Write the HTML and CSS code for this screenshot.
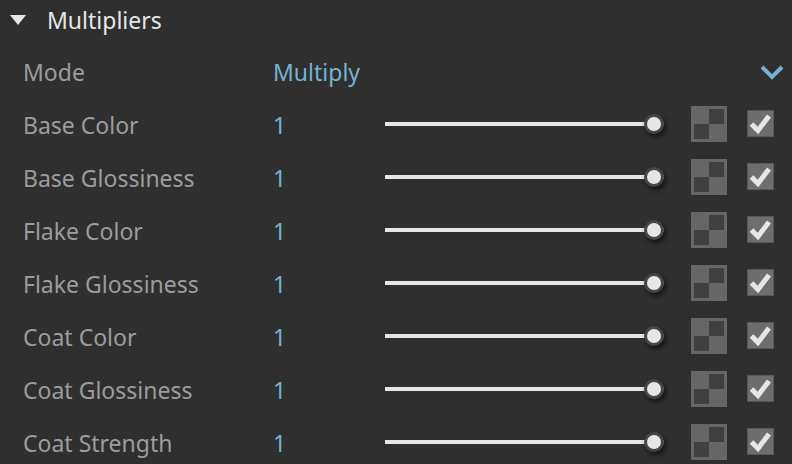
FILE: index.html
```
<!DOCTYPE html>
<html lang="en">
<head>
    <meta charset="UTF-8">
    <meta name="viewport" content="width=device-width, initial-scale=1.0">
    <title>Multipliers</title>
    <link rel="stylesheet" href="styles.css">
</head>
<body>

    <section class="panel">
        <h2 class="panel-title">
            <button type="button" class="panel-toggle" aria-expanded="true">
                <svg class="arrow" viewBox="0 0 18 10" aria-hidden="true"><path d="M1 0h16L9 10z"/></svg>
                Multipliers
            </button>
        </h2>

        <div class="row">
            <label for="mode">Mode</label>
            <div class="dropdown">
                <select id="mode">
                    <option>Multiply</option>
                </select>
                <svg class="chevron" viewBox="0 0 24 16" aria-hidden="true"><path d="M2 3l10 10L22 3"/></svg>
            </div>
        </div>

        <div class="row">
            <label for="base-color">Base Color</label>
            <input type="text" class="value" id="base-color" value="1">
            <input type="range" class="slider" min="0" max="1" step="0.01" value="1" aria-label="Base Color amount">
            <button type="button" class="swatch" aria-label="Base Color map"></button>
            <span class="check">
                <input type="checkbox" checked aria-label="Use Base Color map">
                <svg viewBox="0 0 27 27" aria-hidden="true"><path d="M4.500 14l6.500 6.500L22 6"/></svg>
            </span>
        </div>

        <div class="row">
            <label for="base-gloss">Base Glossiness</label>
            <input type="text" class="value" id="base-gloss" value="1">
            <input type="range" class="slider" min="0" max="1" step="0.01" value="1" aria-label="Base Glossiness amount">
            <button type="button" class="swatch" aria-label="Base Glossiness map"></button>
            <span class="check">
                <input type="checkbox" checked aria-label="Use Base Glossiness map">
                <svg viewBox="0 0 27 27" aria-hidden="true"><path d="M4.500 14l6.500 6.500L22 6"/></svg>
            </span>
        </div>

        <div class="row">
            <label for="flake-color">Flake Color</label>
            <input type="text" class="value" id="flake-color" value="1">
            <input type="range" class="slider" min="0" max="1" step="0.01" value="1" aria-label="Flake Color amount">
            <button type="button" class="swatch" aria-label="Flake Color map"></button>
            <span class="check">
                <input type="checkbox" checked aria-label="Use Flake Color map">
                <svg viewBox="0 0 27 27" aria-hidden="true"><path d="M4.500 14l6.500 6.500L22 6"/></svg>
            </span>
        </div>

        <div class="row">
            <label for="flake-gloss">Flake Glossiness</label>
            <input type="text" class="value" id="flake-gloss" value="1">
            <input type="range" class="slider" min="0" max="1" step="0.01" value="1" aria-label="Flake Glossiness amount">
            <button type="button" class="swatch" aria-label="Flake Glossiness map"></button>
            <span class="check">
                <input type="checkbox" checked aria-label="Use Flake Glossiness map">
                <svg viewBox="0 0 27 27" aria-hidden="true"><path d="M4.500 14l6.500 6.500L22 6"/></svg>
            </span>
        </div>

        <div class="row">
            <label for="coat-color">Coat Color</label>
            <input type="text" class="value" id="coat-color" value="1">
            <input type="range" class="slider" min="0" max="1" step="0.01" value="1" aria-label="Coat Color amount">
            <button type="button" class="swatch" aria-label="Coat Color map"></button>
            <span class="check">
                <input type="checkbox" checked aria-label="Use Coat Color map">
                <svg viewBox="0 0 27 27" aria-hidden="true"><path d="M4.500 14l6.500 6.500L22 6"/></svg>
            </span>
        </div>

        <div class="row">
            <label for="coat-gloss">Coat Glossiness</label>
            <input type="text" class="value" id="coat-gloss" value="1">
            <input type="range" class="slider" min="0" max="1" step="0.01" value="1" aria-label="Coat Glossiness amount">
            <button type="button" class="swatch" aria-label="Coat Glossiness map"></button>
            <span class="check">
                <input type="checkbox" checked aria-label="Use Coat Glossiness map">
                <svg viewBox="0 0 27 27" aria-hidden="true"><path d="M4.500 14l6.500 6.500L22 6"/></svg>
            </span>
        </div>

        <div class="row">
            <label for="coat-strength">Coat Strength</label>
            <input type="text" class="value" id="coat-strength" value="1">
            <input type="range" class="slider" min="0" max="1" step="0.01" value="1" aria-label="Coat Strength amount">
            <button type="button" class="swatch" aria-label="Coat Strength map"></button>
            <span class="check">
                <input type="checkbox" checked aria-label="Use Coat Strength map">
                <svg viewBox="0 0 27 27" aria-hidden="true"><path d="M4.500 14l6.500 6.500L22 6"/></svg>
            </span>
        </div>
    </section>

</body>
</html>
```
FILE: styles.css
```
* {
    box-sizing: border-box;
}

body {
    margin: 0;
    background: #2f2f2f;
    color: #9c9c9c;
    font-family: "Segoe UI", "Noto Sans", sans-serif;
    font-size: 23px;
    line-height: 32px;
    overflow: hidden;
}

button,
input,
select {
    margin: 0;
    padding: 0;
    border: none;
    background: none;
    font: inherit;
    color: inherit;
    appearance: none;
}

/* Header */
.panel-title {
    margin: 0;
    padding: 4px 9px 8px;
    font-size: 23px;
    font-weight: normal;
    color: #e6e6e6;
}

.panel-toggle {
    display: flex;
    align-items: center;
    gap: 20px;
}

.arrow {
    width: 18px;
    height: 10px;
    fill: #e6e6e6;
}

/* Rows */
.row {
    display: grid;
    grid-template-columns: 250px 112px 1fr 56px 27px;
    align-items: center;
    height: 53px;
    padding: 0 18px 0 23px;
}

.row label,
.value,
.dropdown {
    padding-top: 2px;
}

.value {
    width: 80px;
    color: #74b3d1;
}

/* Mode */
.dropdown {
    display: grid;
    grid-column: 2 / -1;
    align-items: center;
    margin-right: -10px;
}

.dropdown select,
.dropdown .chevron {
    grid-area: 1 / 1;
}

.dropdown select {
    color: #74b3d1;
}

.chevron {
    justify-self: end;
    width: 24px;
    height: 16px;
    fill: none;
    stroke: #74b3d1;
    stroke-width: 4;
    pointer-events: none;
}

/* Slider */
.slider {
    width: auto;
    height: 20px;
    margin-right: 27px;
}

.slider::-webkit-slider-runnable-track {
    height: 4px;
    background: #e6e6e3;
}

.slider::-webkit-slider-thumb {
    appearance: none;
    width: 20px;
    height: 20px;
    margin-top: -8px;
    border: 3px solid #464646;
    border-radius: 50%;
    background: #e6e6e6;
    box-shadow: 2px 3px 5px rgba(0, 0, 0, 0.6);
}

/* Checkered map button */
.swatch {
    width: 36px;
    height: 36px;
    border: 3px solid #666;
    background: conic-gradient(#404040 25%, #666 0 50%, #404040 0 75%, #666 0);
}

/* Checkbox */
.check {
    display: grid;
    width: 27px;
    height: 27px;
}

.check input,
.check svg {
    grid-area: 1 / 1;
    width: 27px;
    height: 27px;
}

.check input {
    border: 1px solid #575757;
    background: #6e6e6e;
}

.check svg {
    fill: none;
    stroke: #e6e6e6;
    stroke-width: 5;
    visibility: hidden;
    pointer-events: none;
}

.check input:checked + svg {
    visibility: visible;
}
```
